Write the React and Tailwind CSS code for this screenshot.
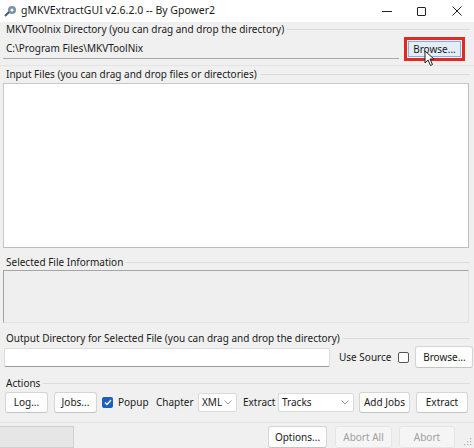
import React from "react";

const font = { fontFamily: '"Segoe UI", "Noto Sans", "Open Sans", sans-serif' };

function GroupLabel({ children }) {
  return (
    <div className="flex items-center h-[14px] pl-[6px] pr-[4px]">
      <span className="text-[10px] leading-none text-[#1a1a1a] whitespace-nowrap pr-[3px]">{children}</span>
      <div className="flex-1 h-px bg-[#dcdcdc]" />
    </div>
  );
}

function Btn({ children, className = "", disabled = false }) {
  return (
    <div
      className={
        "flex items-center justify-center whitespace-nowrap rounded-[3px] border text-[10px] leading-none " +
        (disabled
          ? "bg-[#f5f5f5] border-[#e5e5e5] text-[#a0a0a0] "
          : "bg-[#fdfdfd] border-[#d5d5d5] border-b-[#c4c4c4] text-[#1a1a1a] ") +
        className
      }
    >
      {children}
    </div>
  );
}

function Select({ value, className = "" }) {
  return (
    <div className={"flex items-center justify-between bg-white border border-[#dadada] rounded-[2px] pl-[3px] pr-[4px] text-[10px] leading-none text-[#1a1a1a] whitespace-nowrap " + className}>
      <span>{value}</span>
      <svg width="8" height="5" viewBox="0 0 8 5" fill="none" stroke="#9a9a9a" strokeWidth="1">
        <path d="M0.5 0.5 L4 4 L7.5 0.5" />
      </svg>
    </div>
  );
}

export default function App() {
  return (
    <div className="w-[474px] h-[448px] bg-[#f0f0f0] relative overflow-hidden" style={font}>
      {/* title bar */}
      <div className="h-[22px] bg-white flex items-center">
        <svg className="ml-[4px]" width="13" height="12" viewBox="0 0 13 12">
          <circle cx="8" cy="5" r="4" fill="#7a8fa8" />
          <circle cx="8" cy="5" r="1.6" fill="#ffffff" />
          <path d="M1 11 L5 7" stroke="#3d5a80" strokeWidth="2" />
        </svg>
        <span className="ml-[4px] text-[10.5px] text-[#1a1a1a] whitespace-nowrap">gMKVExtractGUI v2.6.2.0 -- By Gpower2</span>
        <div className="ml-auto flex items-center h-full">
          <div className="w-[35px] flex justify-center">
            <div className="w-[10px] h-px bg-[#222]" />
          </div>
          <div className="w-[35px] flex justify-center">
            <div className="w-[9px] h-[9px] border border-[#222] rounded-[1px]" />
          </div>
          <div className="w-[35px] flex justify-center">
            <svg width="10" height="10" viewBox="0 0 10 10" stroke="#222" strokeWidth="1">
              <path d="M0.5 0.5 L9.5 9.5 M9.5 0.5 L0.5 9.5" />
            </svg>
          </div>
        </div>
      </div>

      {/* MKVToolnix directory */}
      <div className="h-[44px] border-b border-[#e4e4e4]">
        <GroupLabel>MKVToolnix Directory (you can drag and drop the directory)</GroupLabel>
        <div className="flex items-center h-[24px] mt-[1px]">
          <div className="ml-[3px] w-[396px] h-[20px] border-b border-[#a8a8a8] flex items-center pl-[3px] text-[10px] text-[#1a1a1a] whitespace-nowrap">
            C:\Program Files\MKVToolNix
          </div>
          <div className="ml-[5px] w-[61px] h-[24px] border-[3px] border-[#e02a22] p-px">
            <div className="w-full h-full bg-[#e3eefa] border border-[#7fb0e6] flex items-center justify-center text-[10px] leading-none text-[#1a1a1a] whitespace-nowrap">
              Browse...
            </div>
          </div>
        </div>
      </div>

      {/* input files */}
      <div className="mt-[1px]">
        <GroupLabel>Input Files (you can drag and drop files or directories)</GroupLabel>
        <div className="ml-[3px] mt-[2px] w-[466px] h-[165px] bg-white border border-[#c8c8c8] border-r-[#bdbdbd] border-b-[#bdbdbd]" />
      </div>

      {/* selected file info */}
      <div className="mt-[7px]">
        <GroupLabel>Selected File Information</GroupLabel>
        <div className="ml-[3px] mt-[1px] w-[466px] h-[53px] bg-[#efefef] border border-[#e2e2e2] border-t-[#a5a5a5] border-l-[#a5a5a5]" />
      </div>

      {/* output dir */}
      <div className="mt-[8px]">
        <GroupLabel>Output Directory for Selected File (you can drag and drop the directory)</GroupLabel>
        <div className="flex items-center h-[22px] mt-[1px]">
          <div className="ml-[4px] w-[326px] h-[19px] shrink-0 bg-white border border-[#dcdcdc] border-b-[#9a9a9a] rounded-[2px]" />
          <span className="ml-[9px] text-[10px] text-[#1a1a1a] whitespace-nowrap">Use Source</span>
          <div className="ml-[7px] w-[11px] h-[11px] shrink-0 border border-[#555] rounded-[2px] bg-white" />
          <Btn className="ml-[6px] w-[58px] h-[22px] shrink-0">Browse...</Btn>
        </div>
      </div>

      {/* actions */}
      <div className="mt-[8px]">
        <GroupLabel>Actions</GroupLabel>
        <div className="flex items-center h-[22px] mt-[1px]">
          <Btn className="ml-[5px] w-[43px] h-[21px] shrink-0">Log...</Btn>
          <Btn className="ml-[6px] w-[43px] h-[21px] shrink-0">Jobs...</Btn>
          <div className="ml-[5px] w-[11px] h-[11px] shrink-0 rounded-[2px] bg-[#1d5fbf] flex items-center justify-center">
            <svg width="8" height="7" viewBox="0 0 8 7" fill="none" stroke="white" strokeWidth="1.3">
              <path d="M1 3.5 L3 5.5 L7 1" />
            </svg>
          </div>
          <span className="ml-[5px] w-[38px] shrink-0 text-[10px] text-[#1a1a1a] whitespace-nowrap">Popup</span>
          <span className="w-[42px] shrink-0 text-[10px] text-[#1a1a1a] whitespace-nowrap">Chapter</span>
          <Select value="XML" className="w-[39px] h-[19px] shrink-0" />
          <span className="ml-[6px] w-[35px] shrink-0 text-[10px] text-[#1a1a1a] whitespace-nowrap">Extract</span>
          <Select value="Tracks" className="w-[76px] h-[19px] shrink-0" />
          <Btn className="ml-[5px] w-[51px] h-[21px] shrink-0">Add Jobs</Btn>
          <Btn className="ml-[6px] w-[52px] h-[21px] shrink-0">Extract</Btn>
        </div>
      </div>

      {/* bottom bar */}
      <div className="mt-[9px] border-t border-[#e2e2e2] pt-[2px] flex items-center h-[26px]">
        <div className="w-[74px] h-[22px] bg-[#e6e6e6] border border-[#cfcfcf] border-l-0" />
        <Btn className="ml-[194px] w-[59px] h-[22px]">Options...</Btn>
        <Btn disabled className="ml-[8px] w-[57px] h-[22px]">Abort All</Btn>
        <Btn disabled className="ml-[7px] w-[56px] h-[22px]">Abort</Btn>
      </div>

      {/* resize grip */}
      <svg className="absolute right-[2px] bottom-[2px]" width="8" height="8" viewBox="0 0 8 8" fill="#b0b0b0">
        <rect x="6" y="0" width="1.2" height="1.2" />
        <rect x="3" y="3" width="1.2" height="1.2" />
        <rect x="6" y="3" width="1.2" height="1.2" />
        <rect x="0" y="6" width="1.2" height="1.2" />
        <rect x="3" y="6" width="1.2" height="1.2" />
        <rect x="6" y="6" width="1.2" height="1.2" />
      </svg>

      {/* mouse cursor */}
      <svg className="absolute left-[424px] top-[50px]" width="12" height="17" viewBox="0 0 12 17">
        <path d="M1 1 L1 13 L4 10 L6.5 15.5 L8.5 14.5 L6 9 L10 9 Z" fill="white" stroke="#222" strokeWidth="1" strokeLinejoin="round" />
      </svg>
    </div>
  );
}
